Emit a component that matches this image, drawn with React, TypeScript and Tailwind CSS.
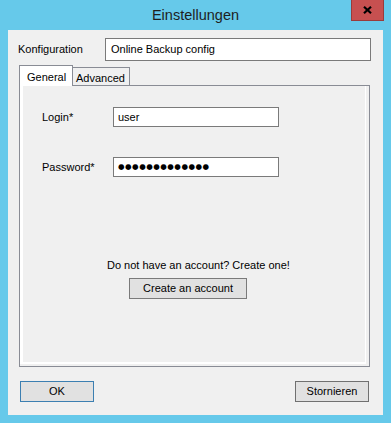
export default function App() {
  return (
    <div className="w-[391px] h-[423px] bg-[#66c9ea] relative overflow-hidden font-['Liberation_Sans',Arial,sans-serif] text-[11px] text-black">
      {/* Title bar */}
      <div className="h-[30px] flex items-center justify-center">
        <span className="text-[14.5px] leading-none text-[#1e1e1e] pt-[1px]">Einstellungen</span>
      </div>
      <div className="absolute top-0 right-[7px] w-[33px] h-[21px] bg-[#c75050] border border-t-0 border-[#9a3b3b] flex items-center justify-center">
        <svg width="9" height="8" viewBox="0 0 9 8">
          <path d="M1 0.8 L8 7.2 M8 0.8 L1 7.2" stroke="#000" strokeWidth="2.2" strokeLinecap="butt" />
        </svg>
      </div>

      {/* Client area */}
      <div className="mx-[8px] h-[385px] bg-[#f0f0f0] flex flex-col">
        <div className="flex items-center pt-[8px] pl-[10px]">
          <span className="w-[87px]">Konfiguration</span>
          <div className="w-[266px] h-[23px] border border-[#7a7a7a] bg-white pl-[5px] flex items-center">
            Online Backup config
          </div>
        </div>

        {/* Tabs */}
        <div className="flex items-end pl-[11px] mt-[4px] h-[20px] relative z-10">
          <div className="w-[54px] h-[21px] -mb-[1px] bg-white border border-b-0 border-[#898c95] pl-[7px] pt-[3px]">
            General
          </div>
          <div className="w-[57px] h-[18px] border-t border-r border-[#898c95] bg-[#f0f0f0] pl-[3px] pt-[2px]">
            Advanced
          </div>
        </div>

        {/* Tab pane */}
        <div className="ml-[11px] w-[351px] h-[282px] border border-[#898c95] bg-[#f0f0f0] flex">
          <div className="flex-1 border-l-[3px] border-r border-b-2 border-white mr-[3px] mb-[2px] flex flex-col">
            <div className="flex items-center mt-[21px]">
              <span className="w-[90px] pl-[19px]">Login*</span>
              <div className="w-[166px] h-[20px] border border-[#7a7a7a] bg-white pl-[4px] flex items-center">user</div>
            </div>
            <div className="flex items-center mt-[30px]">
              <span className="w-[90px] pl-[19px]">Password*</span>
              <div className="w-[166px] h-[20px] border border-[#7a7a7a] bg-white pl-[4px] flex items-center font-['DejaVu_Sans',sans-serif] text-[7.5px] tracking-[0.5px]">
                ●●●●●●●●●●●●●
              </div>
            </div>
            <div className="mt-[83px] pl-[84px] leading-none">Do not have an account? Create one!</div>
            <div className="pl-[106px] mt-[7px]">
              <div className="w-[118px] h-[21px] bg-[#e1e1e1] border border-[#7a7a7a] flex items-center justify-center">
                Create an account
              </div>
            </div>
          </div>
        </div>

        {/* Buttons */}
        <div className="flex justify-between pl-[12px] pr-[14px] mt-[14px]">
          <div className="w-[74px] h-[21px] bg-[#e1e1e1] border border-[#3c7fb1] flex items-center justify-center">OK</div>
          <div className="w-[74px] h-[21px] bg-[#e1e1e1] border border-[#707070] flex items-center justify-center">Stornieren</div>
        </div>
      </div>
    </div>
  );
}
